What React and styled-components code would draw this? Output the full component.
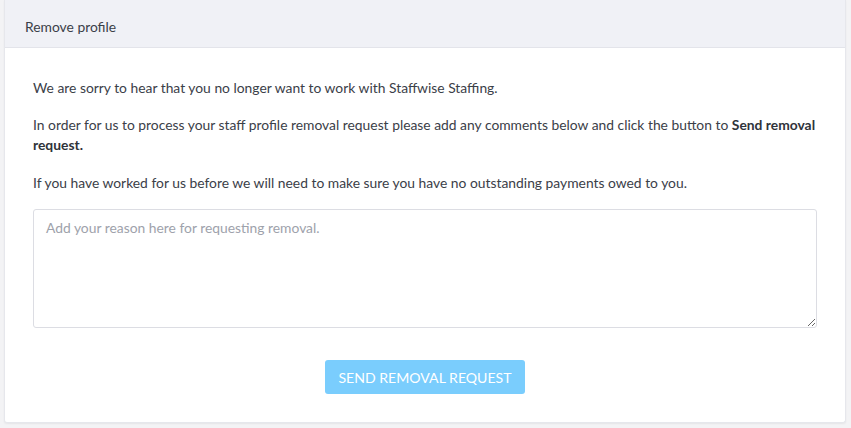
import React, { useState } from 'react'
import styled, { createGlobalStyle } from 'styled-components'

const GlobalStyle = createGlobalStyle`
  html, body {
    margin: 0;
    padding: 0;
    background: #f3f3f5;
    font-family: Lato, "Open Sans", sans-serif;
  }
`

const Page = styled.div`
  padding: 0 5px 6px 4px;
`

const Card = styled.section`
  background: #ffffff;
  border: 1px solid #e6e7ec;
  border-top: none;
  border-radius: 0 0 3px 3px;
  box-shadow: 0 1px 2px rgba(0, 0, 0, 0.06);
`

const CardHeader = styled.header`
  height: 48px;
  box-sizing: border-box;
  display: flex;
  align-items: center;
  padding: 5px 20px 0;
  background: #f0f1f6;
  border-bottom: 1px solid #e3e4ea;
  color: #3b4048;
  font-size: 13.85px;
`

const CardBody = styled.div`
  padding: 30px 28px 28px;
  color: #3b4048;
  font-size: 13.85px;
  line-height: 20px;
`

const Paragraph = styled.p`
  margin: 0 0 ${p => p.$gap || 17}px;
`

const Strong = styled.strong`
  font-weight: 700;
  color: #2f333a;
`

const Reason = styled.textarea`
  display: block;
  width: 100%;
  height: 119px;
  box-sizing: border-box;
  padding: 8px 12px;
  border: 1px solid #dcdde3;
  border-radius: 3px;
  font-family: inherit;
  font-size: 13.85px;
  line-height: 20px;
  color: #3b4048;
  resize: vertical;
  outline: none;

  &::placeholder {
    color: #9ea2ab;
  }
`

const Actions = styled.div`
  display: flex;
  justify-content: center;
  margin-top: 32px;
`

const SubmitButton = styled.button`
  height: 34px;
  padding: 0 13px;
  border: none;
  border-radius: 3px;
  background: #7acdfd;
  color: #ffffff;
  font-family: inherit;
  font-size: 14.1px;
  cursor: pointer;
`

export default function App() {
  const [reason, setReason] = useState('')

  return (
    <>
      <GlobalStyle />
      <Page>
        <Card>
          <CardHeader>Remove profile</CardHeader>
          <CardBody>
            <Paragraph>
              We are sorry to hear that you no longer want to work with Staffwise Staffing.
            </Paragraph>
            <Paragraph $gap={18}>
              In order for us to process your staff profile removal request please add any
              comments below and click the button to <Strong>Send removal request.</Strong>
            </Paragraph>
            <Paragraph $gap={16}>
              If you have worked for us before we will need to make sure you have no
              outstanding payments owed to you.
            </Paragraph>
            <Reason
              placeholder="Add your reason here for requesting removal."
              value={reason}
              onChange={e => setReason(e.target.value)}
            />
            <Actions>
              <SubmitButton disabled={!reason}>SEND REMOVAL REQUEST</SubmitButton>
            </Actions>
          </CardBody>
        </Card>
      </Page>
    </>
  )
}
